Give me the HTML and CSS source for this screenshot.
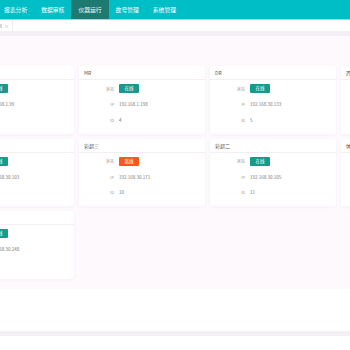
FILE: index.html
```html
<!DOCTYPE html>
<html lang="zh-CN">
<head>
  <meta charset="UTF-8" />
  <meta name="viewport" content="width=device-width, initial-scale=1.0"/>
  <title>仪器运行</title>
  <link rel="stylesheet" href="styles.css">
</head>
<body>

  <!-- 顶部导航 -->
  <header class="topbar">
    <nav class="nav">
      <a class="nav-item">报表分析</a>
      <a class="nav-item">数据审核</a>
      <a class="nav-item active">仪器运行</a>
      <a class="nav-item">故号管理</a>
      <a class="nav-item">系统管理</a>
    </nav>
  </header>

  <!-- 标签栏 -->
  <div class="tabs">
    <div class="tab"><span class="tab-name"></span><span class="tab-close">×</span></div>
  </div>
  <div class="band"></div>

  <!-- 仪器列表 -->
  <main class="content">
    <div id="device-list" class="grid"></div>
  </main>

  <div class="footer-space"></div>
  <div class="band"></div>

  <script>
    const devices = [
      { name: 'CR', online: true, ip: '192.168.1.99', id: 3 },
      { name: 'MR', online: true, ip: '192.168.1.198', id: 4 },
      { name: 'DR', online: true, ip: '192.168.30.133', id: 5 },
      { name: '西门子CT', online: true, ip: '192.168.30.120', id: 6 },
      { name: '彩超一', online: true, ip: '192.168.30.103', id: 9 },
      { name: '彩超三', online: false, ip: '192.168.30.171', id: 10 },
      { name: '彩超二', online: true, ip: '192.168.30.105', id: 11 },
      { name: '体检彩超', online: true, ip: '192.168.30.110', id: 12 },
      { name: '彩超四', online: true, ip: '192.168.30.248', id: 13 },
    ];

    const lista = document.getElementById('device-list');

    function renderDevices() {
      lista.innerHTML = '';
      for (const d of devices) {
        const div = document.createElement('div');
        div.className = 'card';
        div.innerHTML = `
          <div class="card-header">${d.name}</div>
          <div class="card-body">
            <div class="row">
              <span class="label">状态</span>
              <span class="badge ${d.online ? 'on' : 'off'}">${d.online ? '在线' : '离线'}</span>
            </div>
            <div class="row"><span class="label">IP</span><span class="value">${d.ip}</span></div>
            <div class="row"><span class="label">ID</span><span class="value">${d.id}</span></div>
          </div>
        `;
        lista.appendChild(div);
      }
    }

    renderDevices();
  </script>
</body>
</html>
```

FILE: styles.css
```css
body {
  margin: 0;
  font-family: 'Noto Sans CJK SC', 'Noto Sans', sans-serif;
  background-color: #fff;
  color: #333;
  overflow: hidden;
}

/* 顶部导航 */
.topbar {
  height: 19px;
  background-color: #00bec6;
  border-bottom: 1px solid #8fe0e3;
}

.nav {
  display: flex;
  height: 19px;
  margin-left: -3px;
}

.nav-item {
  padding: 0 7px;
  line-height: 19px;
  font-size: 5.8px;
  color: #fff;
}

.nav-item.active {
  background-color: #1e7a70;
}

/* 标签栏 */
.tabs {
  height: 11px;
  display: flex;
}

.tab {
  width: 12px;
  border-right: 1px solid #eee;
  display: flex;
  align-items: center;
}

.tab-name {
  width: 2px;
  height: 4px;
  background: #d6d6d6;
  margin-right: 2px;
}

.tab-close {
  font-size: 5px;
  color: #aaa;
}

.band {
  height: 5px;
  background-color: #f5f0f5;
}

/* 仪器列表 */
.content {
  background-color: #fdf9fd;
  padding: 30px 0 10px;
}

.grid {
  display: grid;
  grid-template-columns: repeat(4, 126px);
  gap: 5px;
  margin-left: -52px;
}

.card {
  background: white;
  border-radius: 2px;
  box-shadow: 0 1px 3px rgba(120, 80, 120, 0.06);
  height: 67.5px;
}

.card-header {
  height: 13px;
  line-height: 13px;
  padding: 0 5px;
  font-size: 5px;
  color: #555;
  border-bottom: 1px solid #f2eef2;
}

.card-body {
  padding-top: 1px;
}

.row {
  display: flex;
  align-items: center;
  height: 15.5px;
}

.label {
  width: 35px;
  text-align: right;
  font-size: 4px;
  color: #999;
  margin-right: 5px;
}

.value {
  font-size: 4.5px;
  color: #777;
}

.badge {
  width: 20px;
  height: 9px;
  line-height: 9px;
  text-align: center;
  font-size: 4.5px;
  color: white;
  border-radius: 1px;
}

.badge.on {
  background-color: #179a8b;
}

.badge.off {
  background-color: #f4591f;
}

.footer-space {
  height: 42px;
}
```
